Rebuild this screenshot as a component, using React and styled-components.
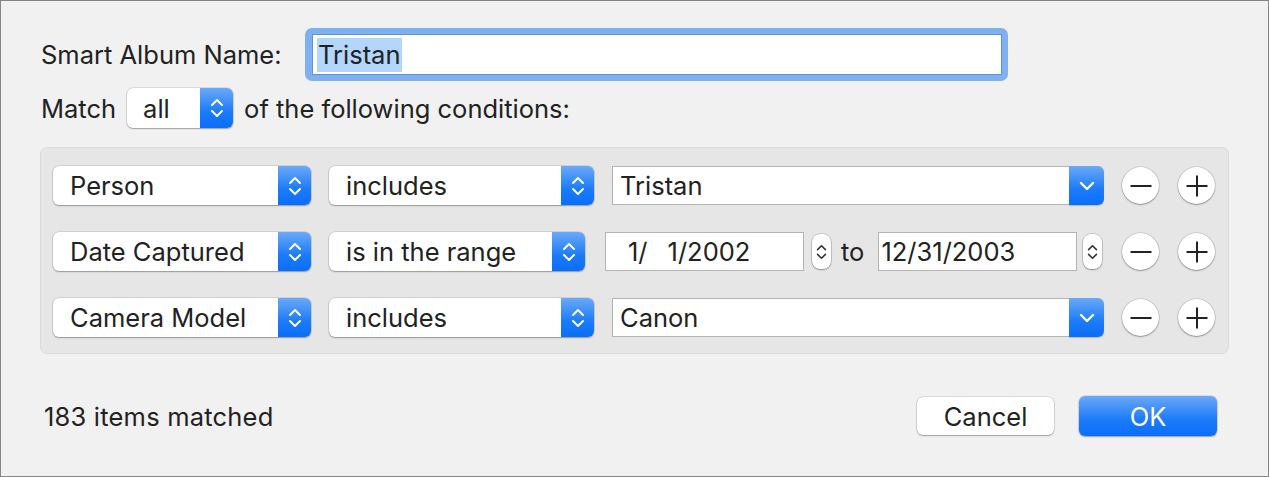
import React from "react";
import styled, { createGlobalStyle } from "styled-components";

const GlobalStyle = createGlobalStyle`
  html, body {
    margin: 0;
    padding: 0;
    background: #f1f1f1;
  }
  body {
    font-family: Inter, "Noto Sans", "Liberation Sans", sans-serif;
    color: #222;
  }
`;

const Dialog = styled.div`
  box-sizing: border-box;
  width: 1269px;
  height: 477px;
  border: 1px solid #858585;
  background: #f1f1f1;
  padding: 27px 51px 0 39px;
  display: flex;
  flex-direction: column;
  font-size: 25.5px;
`;

const NameRow = styled.div`
  display: flex;
  align-items: center;
  height: 53px;
`;

const Label = styled.span`
  width: 264px;
  padding-left: 1px;
  white-space: nowrap;
`;

const FocusRing = styled.div`
  box-sizing: border-box;
  width: 703px;
  height: 53px;
  padding: 6px 6px 6px 7px;
  border-radius: 7px;
  background: #7fb1f1;
`;

const NameField = styled.div`
  box-sizing: border-box;
  height: 100%;
  background: #fff;
  border: 1px solid #5f92dc;
  padding: 3px 4px;
  display: flex;
  align-items: center;
`;

const Selected = styled.span`
  background: #b3d6fd;
  padding: 2px 1px;
  line-height: 30px;
`;

const MatchRow = styled.div`
  display: flex;
  align-items: center;
  margin-top: 7px;
  height: 40px;
  gap: 11px;
  padding-left: 1px;
`;

const Popup = styled.div`
  box-sizing: border-box;
  width: ${(p) => p.$w}px;
  height: ${(p) => p.$h || 39}px;
  flex: none;
  display: flex;
  align-items: stretch;
  background: #fff;
  border-radius: 6px;
  box-shadow: 0 0 0 0.5px rgba(0, 0, 0, 0.18), 0 1px 1.5px rgba(0, 0, 0, 0.28);
  overflow: hidden;
`;

const PopupText = styled.span`
  flex: 1;
  display: flex;
  align-items: center;
  padding-left: ${(p) => p.$pad || 17}px;
  white-space: nowrap;
`;

const BlueCap = styled.div`
  width: ${(p) => p.$w || 33}px;
  flex: none;
  display: flex;
  align-items: center;
  justify-content: center;
  background: linear-gradient(#6aa9f8, #1b7bf9 60%, #0a6efc);
`;

const Panel = styled.div`
  box-sizing: border-box;
  margin-top: 19px;
  width: 1189px;
  height: 207px;
  background: #e6e6e6;
  border: 1px solid #dcdcdc;
  border-radius: 7px;
  padding: 18px 13px 0 12px;
  display: flex;
  flex-direction: column;
  gap: 27px;
`;

const CondRow = styled.div`
  display: flex;
  align-items: center;
  height: 39px;
`;

const Spacer = styled.span`
  width: ${(p) => p.$w}px;
  flex: none;
`;

const Value = styled.div`
  flex: 1;
  display: flex;
  align-items: center;
  margin-left: ${(p) => p.$ml}px;
`;

const ComboField = styled.div`
  box-sizing: border-box;
  flex: 1;
  height: 39px;
  background: #fff;
  border: 1px solid #b4b4b4;
  border-right: none;
  display: flex;
  align-items: center;
  padding-left: 7px;
`;

const ComboButton = styled(BlueCap)`
  width: 35px;
  height: 39px;
  border-radius: 0 6px 6px 0;
  box-shadow: 0 1px 1px rgba(0, 0, 0, 0.2);
`;

const DateField = styled.div`
  box-sizing: border-box;
  width: 199px;
  height: 39px;
  flex: none;
  background: #fff;
  border: 1px solid #b4b4b4;
  display: flex;
  align-items: center;
  padding-left: ${(p) => p.$pad}px;
  white-space: pre;
`;

const DatePart = styled.span`
  margin-left: 20px;
`;

const Stepper = styled.div`
  box-sizing: border-box;
  width: 19px;
  height: 35px;
  flex: none;
  margin-left: ${(p) => p.$ml}px;
  border-radius: 8px;
  background: #fff;
  box-shadow: 0 0 0 0.5px rgba(0, 0, 0, 0.25), 0 1px 1.5px rgba(0, 0, 0, 0.3);
  display: flex;
  align-items: center;
  justify-content: center;
`;

const To = styled.span`
  margin: 0 14px 0 10px;
`;

const RoundButton = styled.div`
  box-sizing: border-box;
  width: 37px;
  height: 37px;
  flex: none;
  margin-left: ${(p) => p.$ml}px;
  border-radius: 50%;
  background: #fff;
  box-shadow: 0 0 0 0.5px rgba(0, 0, 0, 0.2), 0 1px 1.5px rgba(0, 0, 0, 0.3);
  display: flex;
  align-items: center;
  justify-content: center;
`;

const Footer = styled.div`
  display: flex;
  align-items: center;
  margin-top: 42px;
  height: 40px;
`;

const Count = styled.span`
  flex: 1;
  padding-left: 4px;
  letter-spacing: 0.2px;
`;

const Button = styled.div`
  box-sizing: border-box;
  width: ${(p) => p.$w}px;
  height: ${(p) => (p.$primary ? 40 : 38)}px;
  margin-left: ${(p) => p.$ml || 0}px;
  border-radius: 6px;
  display: flex;
  align-items: center;
  justify-content: center;
  background: ${(p) =>
    p.$primary ? "linear-gradient(#6aa9f8, #1b7bf9 60%, #0a6efc)" : "#fff"};
  color: ${(p) => (p.$primary ? "#fff" : "#222")};
  box-shadow: 0 0 0 0.5px rgba(0, 0, 0, 0.18), 0 1px 1.5px rgba(0, 0, 0, 0.28);
`;

const UpDown = ({ color = "#fff", w = 14, h = 24 }) => (
  <svg width={w} height={h} viewBox="0 0 14 24" fill="none">
    <path d="M2 9 L7 4 L12 9" stroke={color} strokeWidth="2" strokeLinecap="round" strokeLinejoin="round" />
    <path d="M2 15 L7 20 L12 15" stroke={color} strokeWidth="2" strokeLinecap="round" strokeLinejoin="round" />
  </svg>
);

const Down = () => (
  <svg width="16" height="10" viewBox="0 0 16 10" fill="none">
    <path d="M2 2 L8 8 L14 2" stroke="#fff" strokeWidth="2.4" strokeLinecap="round" strokeLinejoin="round" />
  </svg>
);

const Minus = () => (
  <svg width="24" height="24" viewBox="0 0 24 24">
    <path d="M1.5 12 H22.5" stroke="#222" strokeWidth="2" />
  </svg>
);

const Plus = () => (
  <svg width="24" height="24" viewBox="0 0 24 24">
    <path d="M1.5 12 H22.5 M12 1.5 V22.5" stroke="#222" strokeWidth="2" />
  </svg>
);

const Controls = () => (
  <>
    <RoundButton $ml={18}>
      <Minus />
    </RoundButton>
    <RoundButton $ml={19}>
      <Plus />
    </RoundButton>
  </>
);

const Select = ({ w, children }) => (
  <Popup $w={w}>
    <PopupText>{children}</PopupText>
    <BlueCap>
      <UpDown />
    </BlueCap>
  </Popup>
);

const Combo = ({ value, ml }) => (
  <Value $ml={ml}>
    <ComboField>{value}</ComboField>
    <ComboButton>
      <Down />
    </ComboButton>
  </Value>
);

export default function App() {
  return (
    <>
      <GlobalStyle />
      <Dialog>
        <NameRow>
          <Label>Smart Album Name:</Label>
          <FocusRing>
            <NameField>
              <Selected>Tristan</Selected>
            </NameField>
          </FocusRing>
        </NameRow>

        <MatchRow>
          <span>Match</span>
          <Popup $w={106} $h={40}>
            <PopupText $pad={16}>all</PopupText>
            <BlueCap>
              <UpDown />
            </BlueCap>
          </Popup>
          <span>of the following conditions:</span>
        </MatchRow>

        <Panel>
          <CondRow>
            <Select w={258}>Person</Select>
            <Spacer $w={18} />
            <Select w={265}>includes</Select>
            <Combo value="Tristan" ml={18} />
            <Controls />
          </CondRow>

          <CondRow>
            <Select w={258}>Date Captured</Select>
            <Spacer $w={18} />
            <Select w={256}>is in the range</Select>
            <Value $ml={20}>
              <DateField $pad={22}>
                1/<DatePart>1/2002</DatePart>
              </DateField>
              <Stepper $ml={8}>
                <UpDown color="#333" w={11} h={26} />
              </Stepper>
              <To>to</To>
              <DateField $pad={2}>12/31/2003</DateField>
              <Stepper $ml={6}>
                <UpDown color="#333" w={11} h={26} />
              </Stepper>
            </Value>
            <Controls />
          </CondRow>

          <CondRow>
            <Select w={258}>Camera Model</Select>
            <Spacer $w={18} />
            <Select w={265}>includes</Select>
            <Combo value="Canon" ml={18} />
            <Controls />
          </CondRow>
        </Panel>

        <Footer>
          <Count>183 items matched</Count>
          <Button $w={137}>Cancel</Button>
          <Button $w={138} $ml={25} $primary>
            OK
          </Button>
        </Footer>
      </Dialog>
    </>
  );
}
